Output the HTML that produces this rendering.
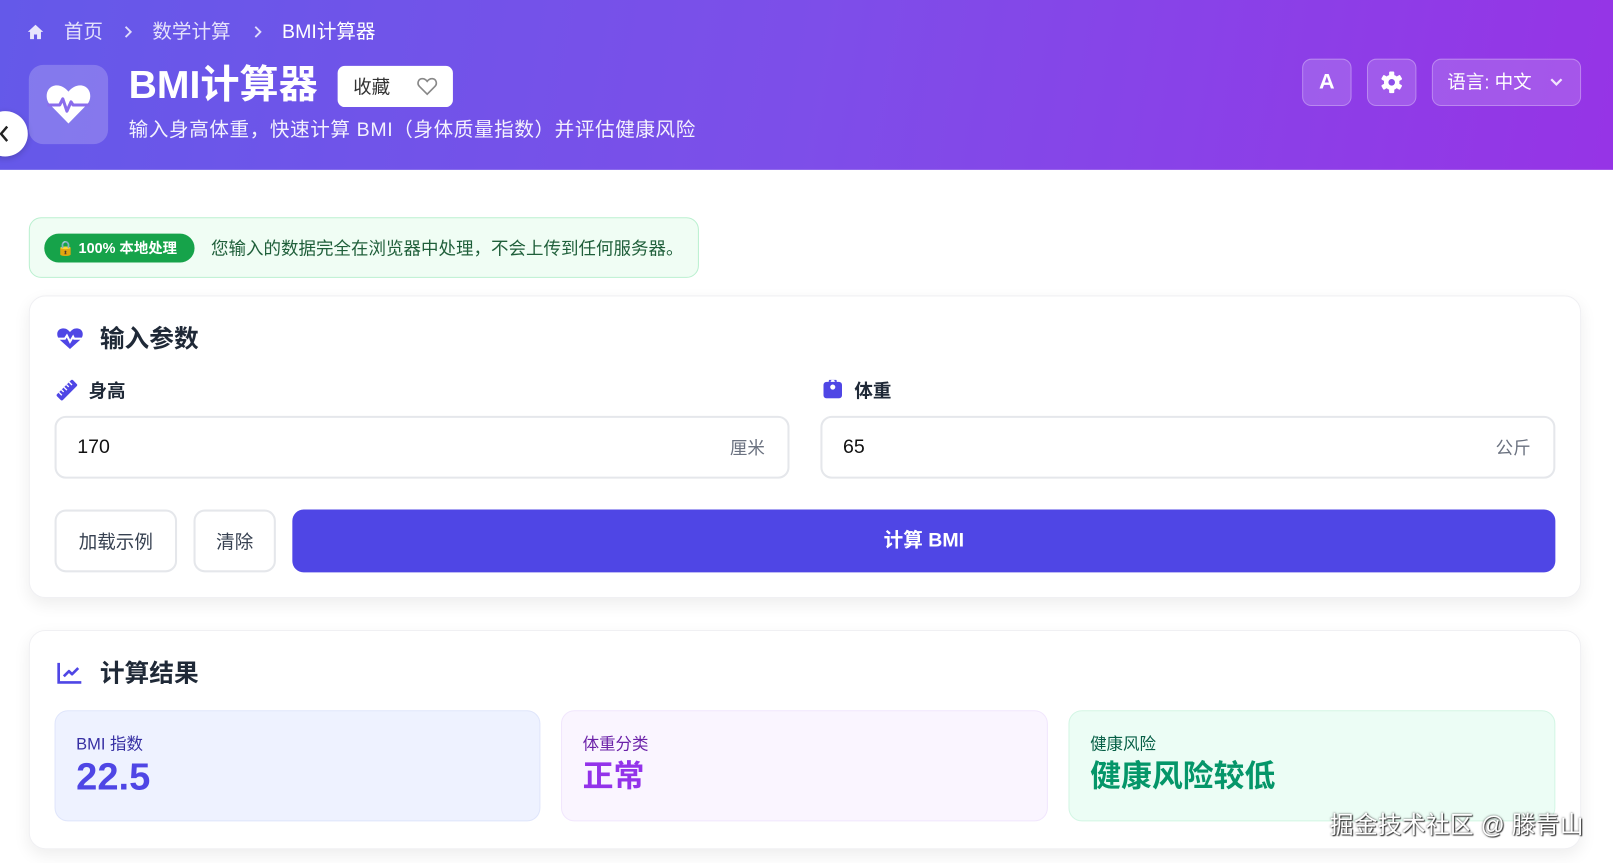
<!DOCTYPE html>
<html><head><meta charset="utf-8"><style>
*{box-sizing:border-box;margin:0;padding:0}
html,body{width:1613px;height:862px;overflow:hidden;background:#fff}
body{font-family:"Liberation Sans","Noto Sans CJK SC",sans-serif}
#w{position:absolute;left:0;top:0;width:1567px;height:838px;transform:scale(1.02936);transform-origin:0 0}
.a{position:absolute}
.hdr{left:0;top:0;width:1567px;height:165px;background:linear-gradient(100deg,#6459e9 0%,#7d4ee9 50%,#9634e6 100%)}
.crumb{top:20px;font-size:19px;color:rgba(255,255,255,.82);line-height:24px}
.btn{background:rgba(255,255,255,.16);border:1px solid rgba(255,255,255,.28);border-radius:9px;color:#fff}
.card{background:#fff;border-radius:16px;border:1px solid #f0f0f3;box-shadow:0 6px 16px rgba(0,0,0,.07)}
.inp{border:2px solid #e5e7eb;border-radius:11px;height:61px;background:#fff}
.lbl{font-size:18px;font-weight:bold;color:#1f2937}
.ob{border:2px solid #e5e7eb;border-radius:11px;height:61px;background:#fff;font-size:18px;color:#374151;display:flex;align-items:center;justify-content:center}
.res{top:690px;height:108px;border-radius:13px;padding:22px 20px}
.res .l{font-size:16px;line-height:22px}
.res .v{font-size:30px;font-weight:bold;line-height:40px}
</style></head><body><div id="w">
<div class="a hdr"></div>
<svg class="a" style="left:26px;top:23px" width="17" height="16" viewBox="0 0 17 16"><path d="M8.5 1L1 8h2.2v7h3.8v-4.5h3v4.5h3.8V8H16z" fill="rgba(255,255,255,.85)"/></svg>
<div class="a crumb" style="left:62px">首页</div>
<svg class="a" style="left:120px;top:24px" width="9" height="14" viewBox="0 0 9 14"><path d="M2 2l5 5-5 5" stroke="rgba(255,255,255,.8)" stroke-width="1.8" fill="none"/></svg>
<div class="a crumb" style="left:148px">数学计算</div>
<svg class="a" style="left:246px;top:24px" width="9" height="14" viewBox="0 0 9 14"><path d="M2 2l5 5-5 5" stroke="rgba(255,255,255,.8)" stroke-width="1.8" fill="none"/></svg>
<div class="a crumb" style="left:274px;color:#fff">BMI计算器</div>
<div class="a" style="left:28px;top:63px;width:77px;height:77px;border-radius:14px;background:rgba(255,255,255,.2)"></div>
<svg class="a" style="left:44px;top:80px" width="45" height="42" viewBox="0 0 45 42"><path d="M22.5 40L4 21C-1 15 1 4 10 3c5-.5 9 2 12.5 6C26 5 30 2.5 35 3c9 1 11 12 6 18z" fill="#fff"/><path d="M2 22h12l3-6 4 12 4-9 2 3h16" stroke="#8a6cec" stroke-width="3" fill="none" stroke-linejoin="round"/></svg>
<div class="a" style="left:125px;top:58px;font-size:38px;font-weight:bold;color:#fff;line-height:50px">BMI计算器</div>
<div class="a" style="left:328px;top:64px;width:112px;height:40px;background:#fff;border-radius:7px"></div>
<div class="a" style="left:343px;top:73px;font-size:18px;color:#333;line-height:24px">收藏</div>
<svg class="a" style="left:405px;top:75px" width="20" height="18" viewBox="0 0 20 18"><path d="M10 16.5L2.5 9C0 6.5 1 2 4.8 1.5 7 1.2 8.8 2.5 10 4c1.2-1.5 3-2.8 5.2-2.5C19 2 20 6.5 17.5 9z" fill="none" stroke="#888" stroke-width="1.6"/></svg>
<div class="a" style="left:125px;top:115px;font-size:19px;letter-spacing:.6px;color:rgba(255,255,255,.92);line-height:24px">输入身高体重，快速计算 BMI（身体质量指数）并评估健康风险</div>
<div class="a" style="left:-17px;top:108px;width:44px;height:44px;border-radius:50%;background:#fff;box-shadow:0 2px 6px rgba(0,0,0,.2)"></div>
<svg class="a" style="left:0;top:122px" width="8" height="16" viewBox="0 0 8 16"><path d="M7 1L1 8l6 7" stroke="#222" stroke-width="2.4" fill="none"/></svg>
<div class="a btn" style="left:1265px;top:57px;width:48px;height:46px;font-size:21px;font-weight:bold;text-align:center;line-height:44px">A</div>
<div class="a btn" style="left:1328px;top:57px;width:48px;height:46px"></div>
<svg class="a" style="left:1341px;top:69px" width="22" height="22" viewBox="0 0 22 22"><g fill="#fff"><circle cx="11" cy="11" r="7.5"/><g id="t"><rect x="8.5" y="0.5" width="5" height="5" rx="1"/><rect x="8.5" y="16.5" width="5" height="5" rx="1"/></g><use href="#t" transform="rotate(60 11 11)"/><use href="#t" transform="rotate(120 11 11)"/></g><circle cx="11" cy="11" r="3.2" fill="#8a4ee9"/></svg>
<div class="a btn" style="left:1391px;top:57px;width:145px;height:46px"></div>
<div class="a" style="left:1406px;top:68px;font-size:18px;color:#fff;line-height:24px">语言: 中文</div>
<svg class="a" style="left:1505px;top:75px" width="14" height="9" viewBox="0 0 14 9"><path d="M2 2l5 5 5-5" stroke="rgba(255,255,255,.85)" stroke-width="2.2" fill="none"/></svg>

<div class="a" style="left:28px;top:211px;width:651px;height:59px;background:#f0fdf4;border:1px solid #bbf0d0;border-radius:12px"></div>
<div class="a" style="left:43px;top:227px;width:146px;height:28px;background:#16a34a;border-radius:14px;color:#fff;font-size:14px;font-weight:bold;line-height:28px;padding-left:12px">🔒 100% 本地处理</div>
<div class="a" style="left:205px;top:231px;font-size:17px;color:#1f5f3a;line-height:22px">您输入的数据完全在浏览器中处理，不会上传到任何服务器。</div>

<div class="a card" style="left:28px;top:287px;width:1508px;height:294px"></div>
<svg class="a" style="left:55px;top:318px" width="26" height="22" viewBox="0 0 26 22"><path d="M13 21L3 12C-1 8 0 1.5 6 1c3-.2 5 1.2 7 3.5C15 2.2 17 .8 20 1c6 .5 7 7 3 11z" fill="#4f46e5"/><path d="M1 11h7l2-3 3 6 3-5 1 2h8" stroke="#fff" stroke-width="2" fill="none"/></svg>
<div class="a" style="left:97px;top:315px;font-size:24px;font-weight:bold;color:#1f2937;line-height:30px">输入参数</div>
<svg class="a" style="left:54px;top:368px" width="22" height="22" viewBox="0 0 22 22"><g transform="rotate(-45 11 11)"><rect x="0" y="7" width="22" height="8" rx="1.5" fill="#4f46e5"/><path d="M4 7v4M7.5 7v3M11 7v4M14.5 7v3M18 7v4" stroke="#fff" stroke-width="1.3"/></g></svg>
<div class="a lbl" style="left:86px;top:368px;line-height:24px">身高</div>
<svg class="a" style="left:800px;top:369px" width="18" height="18" viewBox="0 0 18 18"><rect x="0" y="2" width="18" height="16" rx="3" fill="#4f46e5"/><path d="M6 2a3 3 0 0 1 6 0" stroke="#4f46e5" stroke-width="2" fill="none"/><circle cx="9" cy="7" r="2.5" fill="#fff"/></svg>
<div class="a lbl" style="left:830px;top:368px;line-height:24px">体重</div>
<div class="a inp" style="left:53px;top:404px;width:714px"></div>
<div class="a" style="left:75px;top:423px;font-size:19px;color:#111;line-height:24px">170</div>
<div class="a" style="left:709px;top:424px;font-size:17px;color:#6b7280;line-height:24px">厘米</div>
<div class="a inp" style="left:797px;top:404px;width:714px"></div>
<div class="a" style="left:819px;top:423px;font-size:19px;color:#111;line-height:24px">65</div>
<div class="a" style="left:1453px;top:424px;font-size:17px;color:#6b7280;line-height:24px">公斤</div>
<div class="a ob" style="left:53px;top:495px;width:119px">加载示例</div>
<div class="a ob" style="left:188px;top:495px;width:80px">清除</div>
<div class="a" style="left:284px;top:495px;width:1227px;height:61px;background:#4f46e5;border-radius:11px;color:#fff;font-size:19px;font-weight:bold;text-align:center;line-height:61px">计算 BMI</div>

<div class="a card" style="left:28px;top:612px;width:1508px;height:213px"></div>
<svg class="a" style="left:55px;top:643px" width="25" height="22" viewBox="0 0 25 22"><path d="M2 1v19h22" stroke="#4f46e5" stroke-width="2.6" fill="none"/><path d="M7 14l5-5 3 3 6-6" stroke="#4f46e5" stroke-width="2.6" fill="none" stroke-linejoin="round"/></svg>
<div class="a" style="left:97px;top:640px;font-size:24px;font-weight:bold;color:#1f2937;line-height:30px">计算结果</div>
<div class="a res" style="left:53px;width:472px;background:#eef2ff;border:1px solid #dfe5fb"><div class="l" style="color:#3730a3">BMI 指数</div><div class="v" style="color:#4f46e5;font-size:37px">22.5</div></div>
<div class="a res" style="left:545px;width:473px;background:#faf5ff;border:1px solid #f1e6fd"><div class="l" style="color:#6b21a8">体重分类</div><div class="v" style="color:#9333ea">正常</div></div>
<div class="a res" style="left:1038px;width:473px;background:#ecfdf5;border:1px solid #d3f6e4"><div class="l" style="color:#065f46">健康风险</div><div class="v" style="color:#059669">健康风险较低</div></div>
<div class="a" style="left:1292px;top:787px;font-size:23px;letter-spacing:.3px;color:#fff;line-height:28px;text-shadow:1px 1px 1px #333,0 0 2px #555">掘金技术社区 @ 滕青山</div>
</div></body></html>
